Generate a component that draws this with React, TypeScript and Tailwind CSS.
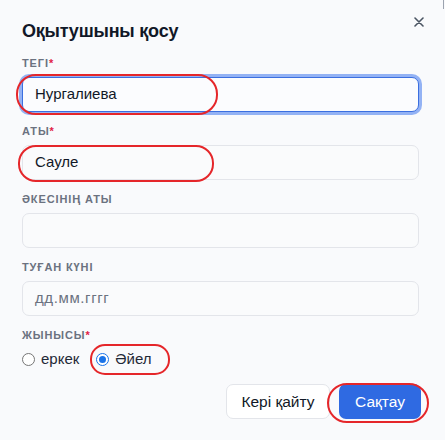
const Label = ({ text, required }: { text: string; required?: boolean }) => (
  <div className="mb-[6px] text-[11px] leading-4 font-bold uppercase tracking-[0.08em] text-[#6b7280]">
    {text}
    {required && <span className="text-[#e11d48]">*</span>}
  </div>
);

const Field = ({
  label,
  required,
  value,
  placeholder,
  focused,
}: {
  label: string;
  required?: boolean;
  value?: string;
  placeholder?: string;
  focused?: boolean;
}) => (
  <div>
    <Label text={label} required={required} />
    <div
      className={
        focused
          ? "flex h-[35px] items-center rounded-[7px] border border-[#3b6fe0] bg-[#fbfcfe] px-3 ring-[3px] ring-[#93b2f4]"
          : "flex h-[35px] items-center rounded-[7px] border border-[#e3e5ea] bg-[#fafbfc] px-3"
      }
    >
      {value ? (
        <span className="text-[15px] text-[#111827]">{value}</span>
      ) : (
        <span className="text-[15px] tracking-[0.04em] text-[#6b7280]">{placeholder}</span>
      )}
    </div>
  </div>
);

const Radio = ({ label, checked }: { label: string; checked?: boolean }) => (
  <label className="flex items-center gap-[6px]">
    {checked ? (
      <span className="flex h-[13px] w-[13px] items-center justify-center rounded-full border border-[#1a73e8] bg-white">
        <span className="h-[7px] w-[7px] rounded-full bg-[#1a73e8]" />
      </span>
    ) : (
      <span className="h-[13px] w-[13px] rounded-full border border-[#767676] bg-white" />
    )}
    <span className="text-[15px] text-[#1f2937]">{label}</span>
  </label>
);

export default function App() {
  return (
    <div
      className="relative h-[440px] w-[445px] overflow-hidden bg-[#f9fafc] px-[22px] pt-[17px]"
      style={{ fontFamily: "'Liberation Sans', Arial, sans-serif" }}
    >
      <div className="absolute right-[1px] top-0 h-[9px] w-px bg-[#9ca3af]" />
      <button className="absolute left-[414px] top-[17px]">
        <svg width="10" height="10" viewBox="0 0 10 10" fill="none" stroke="#4b5563" strokeWidth="1.6" strokeLinecap="round">
          <path d="M1 1L9 9M9 1L1 9" />
        </svg>
      </button>

      <h2 className="text-[18px] leading-7 font-bold tracking-[-0.2px] text-[#111827]">Оқытушыны қосу</h2>

      <div className="mt-[10px] flex flex-col gap-[11px] pr-[4px]">
        <Field label="Тегі" required value="Нургалиева" focused />
        <Field label="Аты" required value="Сауле" />
        <Field label="Әкесінің аты" />
        <Field label="Туған күні" placeholder="дд.мм.гггг" />
        <div>
          <Label text="Жынысы" required />
          <div className="flex h-5 items-center gap-[17px]">
            <Radio label="еркек" />
            <Radio label="Әйел" checked />
          </div>
        </div>
      </div>

      <div className="mt-[15px] flex justify-end gap-[9px] pr-[2px]">
        <button className="h-[35px] w-[104px] rounded-[7px] border border-[#e3e5ea] bg-white text-[15.5px] text-[#111827]">
          Кері қайту
        </button>
        <button className="h-[35px] w-[82px] rounded-[7px] bg-[#2f6ae2] text-[15.5px] text-white">
          Сақтау
        </button>
      </div>

      <div className="pointer-events-none absolute left-[16px] top-[74px] h-[41px] w-[202px] rounded-[20px] border-2 border-[#e5262a]" />
      <div className="pointer-events-none absolute left-[18px] top-[145px] h-[37px] w-[196px] rounded-[18px] border-2 border-[#e5262a]" />
      <div className="pointer-events-none absolute left-[90px] top-[344px] h-[31px] w-[80px] rounded-[15px] border-2 border-[#e5262a]" />
      <div className="pointer-events-none absolute left-[327px] top-[383px] h-[40px] w-[102px] rounded-[20px] border-2 border-[#e5262a]" />
    </div>
  );
}
